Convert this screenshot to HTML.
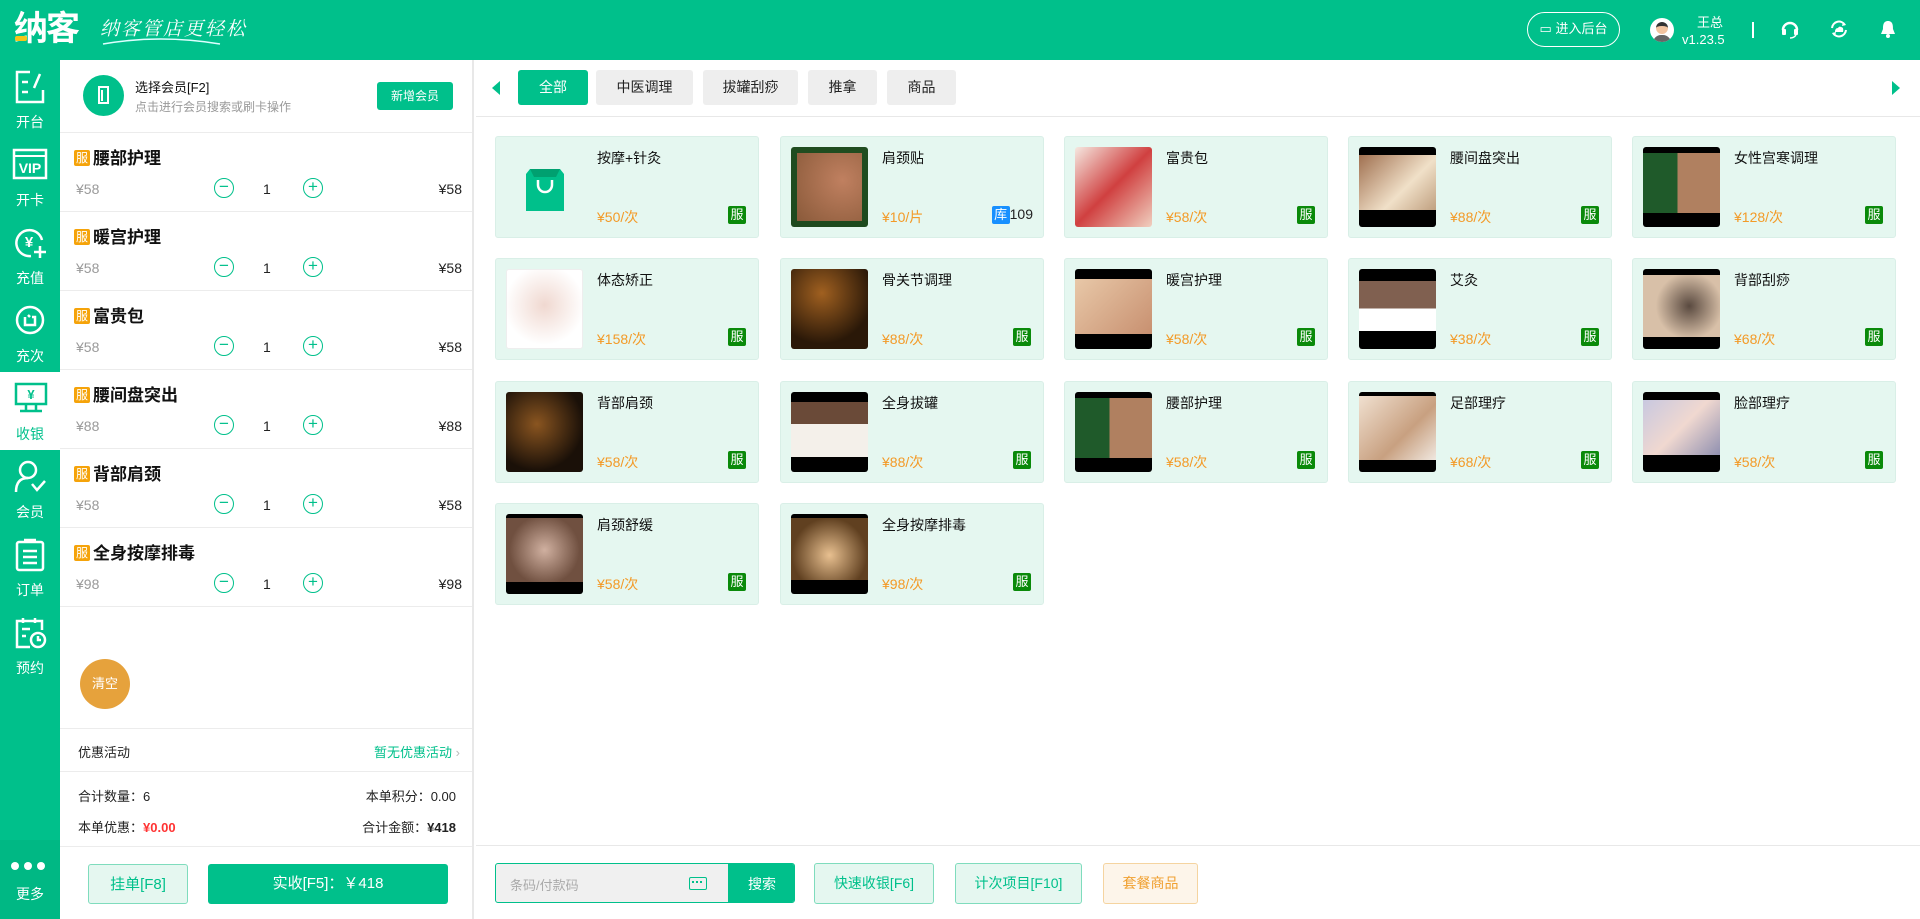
<!DOCTYPE html>
<html><head><meta charset="utf-8"><style>
*{margin:0;padding:0;box-sizing:border-box}
body{width:1920px;height:919px;overflow:hidden;background:#fff;font-family:"Liberation Sans","Noto Sans CJK SC",sans-serif;color:#222;position:relative}
.abs{position:absolute}
#hdr{left:0;top:0;width:1920px;height:60px;background:#00c08b}
#side{left:0;top:60px;width:60px;height:859px;background:#00c08b}
.si{position:absolute;left:0;width:60px;height:78px;color:#fff;font-size:14px;text-align:center}
.si svg{position:absolute;left:14px;top:10px}
.si span{position:absolute;left:0;right:0;top:52px}
.si.act{background:#fff;color:#00c08b}
#lp{left:60px;top:60px;width:414px;height:859px;border-right:2px solid #e8e8e8;background:#fff}
.item{position:absolute;left:0;width:412px;height:79px;border-bottom:1px solid #ececec}
.item .nm{position:absolute;left:14px;top:11px;font-size:17px;font-weight:bold;color:#111}
.fu{display:inline-block;width:16px;height:16px;background:#f5a30a;color:#fff;font-size:12px;line-height:16px;text-align:center;border-radius:2px;font-weight:normal;vertical-align:2px;margin-right:3px}
.item .op{position:absolute;left:16px;top:48px;font-size:14px;color:#999}
.item .q{position:absolute;left:203px;top:48px;font-size:14px}
.cb{position:absolute;top:45px;width:20px;height:20px;border:1.5px solid #00c08b;border-radius:50%;color:#00c08b;text-align:center;line-height:16px;font-size:17px}
.item .pr{position:absolute;right:10px;top:48px;font-size:14px}
.tab{position:absolute;top:70px;height:35px;background:#eee;border-radius:3px;font-size:14px;line-height:35px;text-align:center;color:#222}
.card{position:absolute;width:264px;height:102px;background:#e5f7f0;border:1px solid #d9efe7;border-radius:3px}
.card .im{position:absolute;left:10px;top:10px;width:77px;height:80px;border-radius:3px;background:#000;overflow:hidden}
.card .t{position:absolute;left:101px;top:11px;font-size:14px;color:#111}
.card .p{position:absolute;left:101px;top:70px;font-size:14px;color:#f39a27}
.card .b{position:absolute;right:12px;top:69px;width:18px;height:18px;background:#0a8a0a;color:#fff;font-size:13px;line-height:18px;text-align:center;border-radius:2px}
.btn{position:absolute;height:41px;border-radius:3px;font-size:14px;line-height:39px;text-align:center}
</style></head><body>
<div id="hdr" class="abs">
 <div class="abs" style="left:14px;top:9px;font-size:34px;font-weight:bold;color:#fff;letter-spacing:-2px;line-height:40px">纳客</div>
 <div class="abs" style="left:15px;top:36px;width:12px;height:5px;background:#f5c518;border-radius:2px"></div>
 <div class="abs" style="left:100px;top:14px;font-size:19px;color:#fff;font-style:italic;font-family:'Liberation Serif','Noto Serif CJK SC',serif;letter-spacing:2px">纳客管店更轻松</div>
 <svg class="abs" style="left:100px;top:36px" width="125" height="10"><path d="M3 8 Q60 -2 120 8" stroke="#dff" stroke-width="1.5" fill="none"/></svg>
 <div class="abs" style="left:1527px;top:12px;width:93px;height:35px;border:1.5px solid #fff;border-radius:18px;color:#fff;font-size:13px;line-height:32px;text-align:center">▭ 进入后台</div>
 <div class="abs" style="left:1650px;top:18px;width:24px;height:24px;border-radius:50%;background:#fff;overflow:hidden"><div style="margin:4px auto 0;width:12px;height:12px;border-radius:50%;background:#f2c4a0;border-top:4px solid #333"></div><div style="margin:1px auto;width:18px;height:8px;background:#666;border-radius:8px 8px 0 0"></div></div>
 <div class="abs" style="left:1690px;top:12px;color:#fff;font-size:13px;width:40px;text-align:center">王总</div>
 <div class="abs" style="left:1682px;top:32px;color:#fff;font-size:13px">v1.23.5</div>
 <div class="abs" style="left:1752px;top:22px;width:2px;height:16px;background:#fff"></div>
 <svg class="abs" style="left:1780px;top:19px" width="20" height="20" viewBox="0 0 20 20"><path d="M3 11 A7 7 0 0 1 17 11" stroke="#fff" stroke-width="2.5" fill="none"/><rect x="2" y="10" width="4" height="6" rx="1" fill="#fff"/><rect x="14" y="10" width="4" height="6" rx="1" fill="#fff"/><path d="M16 16 Q14 19 10 19" stroke="#fff" stroke-width="1.5" fill="none"/></svg>
 <svg class="abs" style="left:1829px;top:19px" width="20" height="20" viewBox="0 0 20 20"><path d="M3 9 A7 7 0 0 1 16 6 M17 11 A7 7 0 0 1 4 14" stroke="#fff" stroke-width="2" fill="none"/><path d="M14 3 l3 3 -4 1z M6 17 l-3-3 4-1z" fill="#fff"/><path d="M6 13 Q6 9 9 9 Q10 7 12 8 Q15 8 14 13z" fill="#fff"/></svg>
 <svg class="abs" style="left:1879px;top:19px" width="18" height="20" viewBox="0 0 18 20"><path d="M9 2 C4 2 4 7 4 10 L2 15 H16 L14 10 C14 7 14 2 9 2z" fill="#fff"/><circle cx="9" cy="17" r="2" fill="#fff"/></svg>
</div>

<div id="side" class="abs">
 <div class="si" style="top:0"><svg width="32" height="34" viewBox="0 0 32 34" fill="none" stroke="#fff" stroke-width="2.5"><path d="M16 2 H3 V32 H29 V20"/><path d="M8 12 H14 M8 22 H14"/><path d="M26 4 L20 18"/></svg><span>开台</span></div>
 <div class="si" style="top:78px"><svg width="36" height="32" viewBox="0 0 36 32" style="left:12px"><rect x="2" y="2" width="32" height="28" fill="none" stroke="#fff" stroke-width="2.5"/><path d="M2 8 H34" stroke="#fff" stroke-width="2"/><text x="18" y="25" font-size="14" font-weight="bold" fill="#fff" text-anchor="middle" font-family="Liberation Sans">VIP</text></svg><span>开卡</span></div>
 <div class="si" style="top:156px"><svg width="34" height="34" viewBox="0 0 34 34"><path d="M28 14 A13 13 0 1 0 17 30" stroke="#fff" stroke-width="2.5" fill="none"/><text x="15" y="21" font-size="15" font-weight="bold" fill="#fff" text-anchor="middle">¥</text><path d="M26 20 V32 M20 26 H32" stroke="#fff" stroke-width="2.5"/></svg><span>充值</span></div>
 <div class="si" style="top:234px"><svg width="32" height="32" viewBox="0 0 32 32" fill="none" stroke="#fff" stroke-width="2.5"><circle cx="16" cy="16" r="13"/><path d="M11 13 V21 H21 V13 H18 M14 11 L16 13"/></svg><span>充次</span></div>
 <div class="si act" style="top:312px"><svg width="34" height="32" viewBox="0 0 34 32" fill="none" stroke="#00c08b" stroke-width="2.5"><rect x="2" y="2" width="30" height="20"/><path d="M12 22 V28 M22 22 V28 M6 29 H28"/><text x="17" y="17" font-size="13" font-weight="bold" fill="#00c08b" stroke="none" text-anchor="middle">¥</text></svg><span>收银</span></div>
 <div class="si" style="top:390px"><svg width="34" height="34" viewBox="0 0 34 34" fill="none" stroke="#fff" stroke-width="2.5"><circle cx="14" cy="10" r="8"/><path d="M2 32 Q2 18 14 18"/><path d="M18 24 L23 30 L31 21"/></svg><span>会员</span></div>
 <div class="si" style="top:468px"><svg width="32" height="34" viewBox="0 0 32 34" fill="none" stroke="#fff" stroke-width="2.5"><rect x="3" y="4" width="26" height="28" rx="2"/><path d="M10 2 H22 M9 13 H23 M9 19 H23 M9 25 H23"/></svg><span>订单</span></div>
 <div class="si" style="top:546px"><svg width="34" height="34" viewBox="0 0 34 34" fill="none" stroke="#fff" stroke-width="2.5"><path d="M16 31 H3 V5 H28 V14"/><path d="M9 2 V7 M21 2 V7 M8 13 H16 M8 20 H12"/><circle cx="24" cy="24" r="7"/><path d="M24 20 V24 H27"/></svg><span>预约</span></div>
 <div class="abs" style="left:0;top:780px;width:60px;height:79px;background:#00b884">
  <div class="abs" style="left:11px;top:22px;font-size:0"><i style="display:inline-block;width:8px;height:8px;border-radius:50%;background:#fff;margin-right:5px"></i><i style="display:inline-block;width:8px;height:8px;border-radius:50%;background:#fff;margin-right:5px"></i><i style="display:inline-block;width:8px;height:8px;border-radius:50%;background:#fff"></i></div>
  <div class="abs" style="left:0;width:60px;top:44px;text-align:center;color:#fff;font-size:14px">更多</div>
 </div>
</div>

<div id="lp" class="abs">
 <div class="abs" style="left:23px;top:15px;width:41px;height:41px;border-radius:50%;background:#00c08b"><svg width="41" height="41"><path d="M16 12 H25 V28 H16z" fill="none" stroke="#fff" stroke-width="2"/><path d="M19 15 V26" stroke="#fff" stroke-width="2"/></svg></div>
 <div class="abs" style="left:75px;top:17px;font-size:13px;color:#111">选择会员[F2]</div>
 <div class="abs" style="left:75px;top:38px;font-size:12px;color:#999">点击进行会员搜索或刷卡操作</div>
 <div class="abs" style="left:317px;top:22px;width:76px;height:28px;background:#00c08b;color:#fff;border-radius:3px;font-size:12px;line-height:28px;text-align:center">新增会员</div>
 <div class="abs" style="left:0;top:72px;width:412px;height:1px;background:#ececec"></div>
 <div class="item" style="top:73px"><div class="nm"><span class="fu">服</span>腰部护理</div><div class="op">¥58</div><div class="cb" style="left:154px">−</div><div class="q">1</div><div class="cb" style="left:243px">+</div><div class="pr">¥58</div></div>
 <div class="item" style="top:152px"><div class="nm"><span class="fu">服</span>暖宫护理</div><div class="op">¥58</div><div class="cb" style="left:154px">−</div><div class="q">1</div><div class="cb" style="left:243px">+</div><div class="pr">¥58</div></div>
 <div class="item" style="top:231px"><div class="nm"><span class="fu">服</span>富贵包</div><div class="op">¥58</div><div class="cb" style="left:154px">−</div><div class="q">1</div><div class="cb" style="left:243px">+</div><div class="pr">¥58</div></div>
 <div class="item" style="top:310px"><div class="nm"><span class="fu">服</span>腰间盘突出</div><div class="op">¥88</div><div class="cb" style="left:154px">−</div><div class="q">1</div><div class="cb" style="left:243px">+</div><div class="pr">¥88</div></div>
 <div class="item" style="top:389px"><div class="nm"><span class="fu">服</span>背部肩颈</div><div class="op">¥58</div><div class="cb" style="left:154px">−</div><div class="q">1</div><div class="cb" style="left:243px">+</div><div class="pr">¥58</div></div>
 <div class="item" style="top:468px"><div class="nm"><span class="fu">服</span>全身按摩排毒</div><div class="op">¥98</div><div class="cb" style="left:154px">−</div><div class="q">1</div><div class="cb" style="left:243px">+</div><div class="pr">¥98</div></div>
 <div class="abs" style="left:20px;top:599px;width:50px;height:50px;border-radius:50%;background:#e6a23c;color:#fff;font-size:13px;line-height:50px;text-align:center">清空</div>
 <div class="abs" style="left:0;top:668px;width:412px;height:1px;background:#ececec"></div>
 <div class="abs" style="left:18px;top:682px;font-size:13px">优惠活动</div>
 <div class="abs" style="right:12px;top:682px;font-size:13px;color:#00c08b">暂无优惠活动 <span style="color:#bbb">›</span></div>
 <div class="abs" style="left:0;top:711px;width:412px;height:1px;background:#ececec"></div>
 <div class="abs" style="left:18px;top:726px;font-size:13px">合计数量：6</div>
 <div class="abs" style="right:16px;top:726px;font-size:13px">本单积分：0.00</div>
 <div class="abs" style="left:18px;top:757px;font-size:13px">本单优惠：<b style="color:#f33">¥0.00</b></div>
 <div class="abs" style="right:16px;top:757px;font-size:13px">合计金额：<b>¥418</b></div>
 <div class="abs" style="left:0;top:786px;width:412px;height:1px;background:#ececec"></div>
 <div class="btn" style="left:28px;top:804px;width:100px;height:40px;background:#e5f7f0;border:1px solid #7fdcbd;color:#00c08b;font-size:15px">挂单[F8]</div>
 <div class="btn" style="left:148px;top:804px;width:240px;height:40px;background:#00c08b;color:#fff;font-size:15px;line-height:40px">实收[F5]：￥418</div>
</div>

<svg class="abs" style="left:491px;top:81px" width="10" height="14"><path d="M9 0 V14 L1 7z" fill="#00c08b"/></svg>
<div class="tab" style="left:518px;width:70px;background:#00c08b;color:#fff">全部</div>
<div class="tab" style="left:596px;width:97px">中医调理</div>
<div class="tab" style="left:703px;width:95px">拔罐刮痧</div>
<div class="tab" style="left:808px;width:69px">推拿</div>
<div class="tab" style="left:887px;width:69px">商品</div>
<svg class="abs" style="left:1891px;top:81px" width="10" height="14"><path d="M1 0 V14 L9 7z" fill="#00c08b"/></svg>
<div class="abs" style="left:476px;top:116px;width:1444px;height:1px;background:#e8e8e8"></div>

<div class="card" style="left:495px;top:136px"><div class="im" style="background:transparent"><svg width="77" height="80"><path d="M24 22 H54 L58 27 V64 H20 V27z" fill="#00c08b"/><path d="M24 22 L28 30 H50 L54 22z" fill="#00a070"/><path d="M32 33 V38 A7 7 0 0 0 46 38 V33" stroke="#fff" stroke-width="2.5" fill="none"/></svg></div><div class="t">按摩+针灸</div><div class="p">¥50/次</div><div class="b">服</div></div>
<div class="card" style="left:780px;top:136px"><div class="im" style="background:linear-gradient(#204d20,#1e4a1e)"><div style="margin:6px;height:68px;background:radial-gradient(circle at 70% 40%,#c08060,#8a5a3a)"></div></div><div class="t">肩颈贴</div><div class="p">¥10/片</div><div class="abs" style="right:10px;top:69px;font-size:14px"><span style="display:inline-block;width:18px;height:18px;background:#1890ff;color:#fff;font-size:13px;line-height:18px;text-align:center;border-radius:2px">库</span>109</div></div>
<div class="card" style="left:1064px;top:136px"><div class="im" style="background:linear-gradient(135deg,#f5e8e0,#d04040 50%,#f0d0c0)"></div><div class="t">富贵包</div><div class="p">¥58/次</div><div class="b">服</div></div>
<div class="card" style="left:1348px;top:136px"><div class="im"><div style="margin-top:8px;height:55px;background:linear-gradient(135deg,#a07050,#f0e0c8 60%,#c0a080)"></div></div><div class="t">腰间盘突出</div><div class="p">¥88/次</div><div class="b">服</div></div>
<div class="card" style="left:1632px;top:136px"><div class="im"><div style="margin-top:6px;height:60px;background:linear-gradient(90deg,#1f5a2a 45%,#b08060 45%)"></div></div><div class="t">女性宫寒调理</div><div class="p">¥128/次</div><div class="b">服</div></div>

<div class="card" style="left:495px;top:258px"><div class="im" style="background:radial-gradient(circle at 50% 45%,#f0d8d0,#fff 70%);border:1px solid #eee"></div><div class="t">体态矫正</div><div class="p">¥158/次</div><div class="b">服</div></div>
<div class="card" style="left:780px;top:258px"><div class="im" style="background:radial-gradient(circle at 40% 30%,#a06020,#2a1808 70%)"></div><div class="t">骨关节调理</div><div class="p">¥88/次</div><div class="b">服</div></div>
<div class="card" style="left:1064px;top:258px"><div class="im"><div style="margin-top:10px;height:55px;background:linear-gradient(135deg,#e8c8a8,#c89070)"></div></div><div class="t">暖宫护理</div><div class="p">¥58/次</div><div class="b">服</div></div>
<div class="card" style="left:1348px;top:258px"><div class="im"><div style="margin-top:12px;height:50px;background:linear-gradient(#806050 55%,#fff 55%)"></div></div><div class="t">艾灸</div><div class="p">¥38/次</div><div class="b">服</div></div>
<div class="card" style="left:1632px;top:258px"><div class="im"><div style="margin-top:6px;height:62px;background:radial-gradient(circle at 60% 50%,#5a4a40,#d8c0a8 60%)"></div></div><div class="t">背部刮痧</div><div class="p">¥68/次</div><div class="b">服</div></div>

<div class="card" style="left:495px;top:381px"><div class="im" style="background:radial-gradient(circle at 40% 40%,#8a5520,#1a1008 70%)"></div><div class="t">背部肩颈</div><div class="p">¥58/次</div><div class="b">服</div></div>
<div class="card" style="left:780px;top:381px"><div class="im"><div style="margin-top:10px;height:55px;background:linear-gradient(#6a4a38 40%,#f4f0ea 40%)"></div></div><div class="t">全身拔罐</div><div class="p">¥88/次</div><div class="b">服</div></div>
<div class="card" style="left:1064px;top:381px"><div class="im"><div style="margin-top:6px;height:60px;background:linear-gradient(90deg,#1f5a2a 45%,#b08060 45%)"></div></div><div class="t">腰部护理</div><div class="p">¥58/次</div><div class="b">服</div></div>
<div class="card" style="left:1348px;top:381px"><div class="im"><div style="margin-top:4px;height:64px;background:linear-gradient(135deg,#f0e0d0,#c8a080 60%,#f0e8e0)"></div></div><div class="t">足部理疗</div><div class="p">¥68/次</div><div class="b">服</div></div>
<div class="card" style="left:1632px;top:381px"><div class="im"><div style="margin-top:8px;height:55px;background:linear-gradient(135deg,#c8c8e0,#f0d8d0 50%,#9090b0)"></div></div><div class="t">脸部理疗</div><div class="p">¥58/次</div><div class="b">服</div></div>

<div class="card" style="left:495px;top:503px"><div class="im"><div style="margin-top:4px;height:64px;background:radial-gradient(circle at 50% 50%,#d0b0a0,#705040 70%)"></div></div><div class="t">肩颈舒缓</div><div class="p">¥58/次</div><div class="b">服</div></div>
<div class="card" style="left:780px;top:503px"><div class="im"><div style="margin-top:4px;height:62px;background:radial-gradient(circle at 50% 60%,#e8c090,#604020 70%)"></div></div><div class="t">全身按摩排毒</div><div class="p">¥98/次</div><div class="b">服</div></div>

<div class="abs" style="left:476px;top:845px;width:1444px;height:1px;background:#e8e8e8"></div>
<div class="abs" style="left:495px;top:863px;width:300px;height:40px;border:1px solid #00c08b;border-radius:3px;background:#f0f0f0;overflow:hidden">
 <div class="abs" style="left:14px;top:11px;font-size:13px;color:#aaa">条码/付款码</div>
 <div class="abs" style="left:193px;top:13px;width:18px;height:13px;border:1.5px solid #00c08b;border-radius:2px;background:repeating-linear-gradient(90deg,#00c08b 0 2px,transparent 2px 4px) 2px 3px/12px 2px no-repeat"></div>
 <div class="abs" style="left:232px;top:0;width:68px;height:40px;background:#00c08b;color:#fff;font-size:14px;line-height:40px;text-align:center">搜索</div>
</div>
<div class="btn" style="left:814px;top:863px;width:120px;background:#e5f7f0;border:1px solid #7fdcbd;color:#00c08b">快速收银[F6]</div>
<div class="btn" style="left:955px;top:863px;width:127px;background:#e5f7f0;border:1px solid #7fdcbd;color:#00c08b">计次项目[F10]</div>
<div class="btn" style="left:1103px;top:863px;width:95px;background:#fdf5ea;border:1px solid #f5d4a0;color:#f0a030">套餐商品</div>
</body></html>
